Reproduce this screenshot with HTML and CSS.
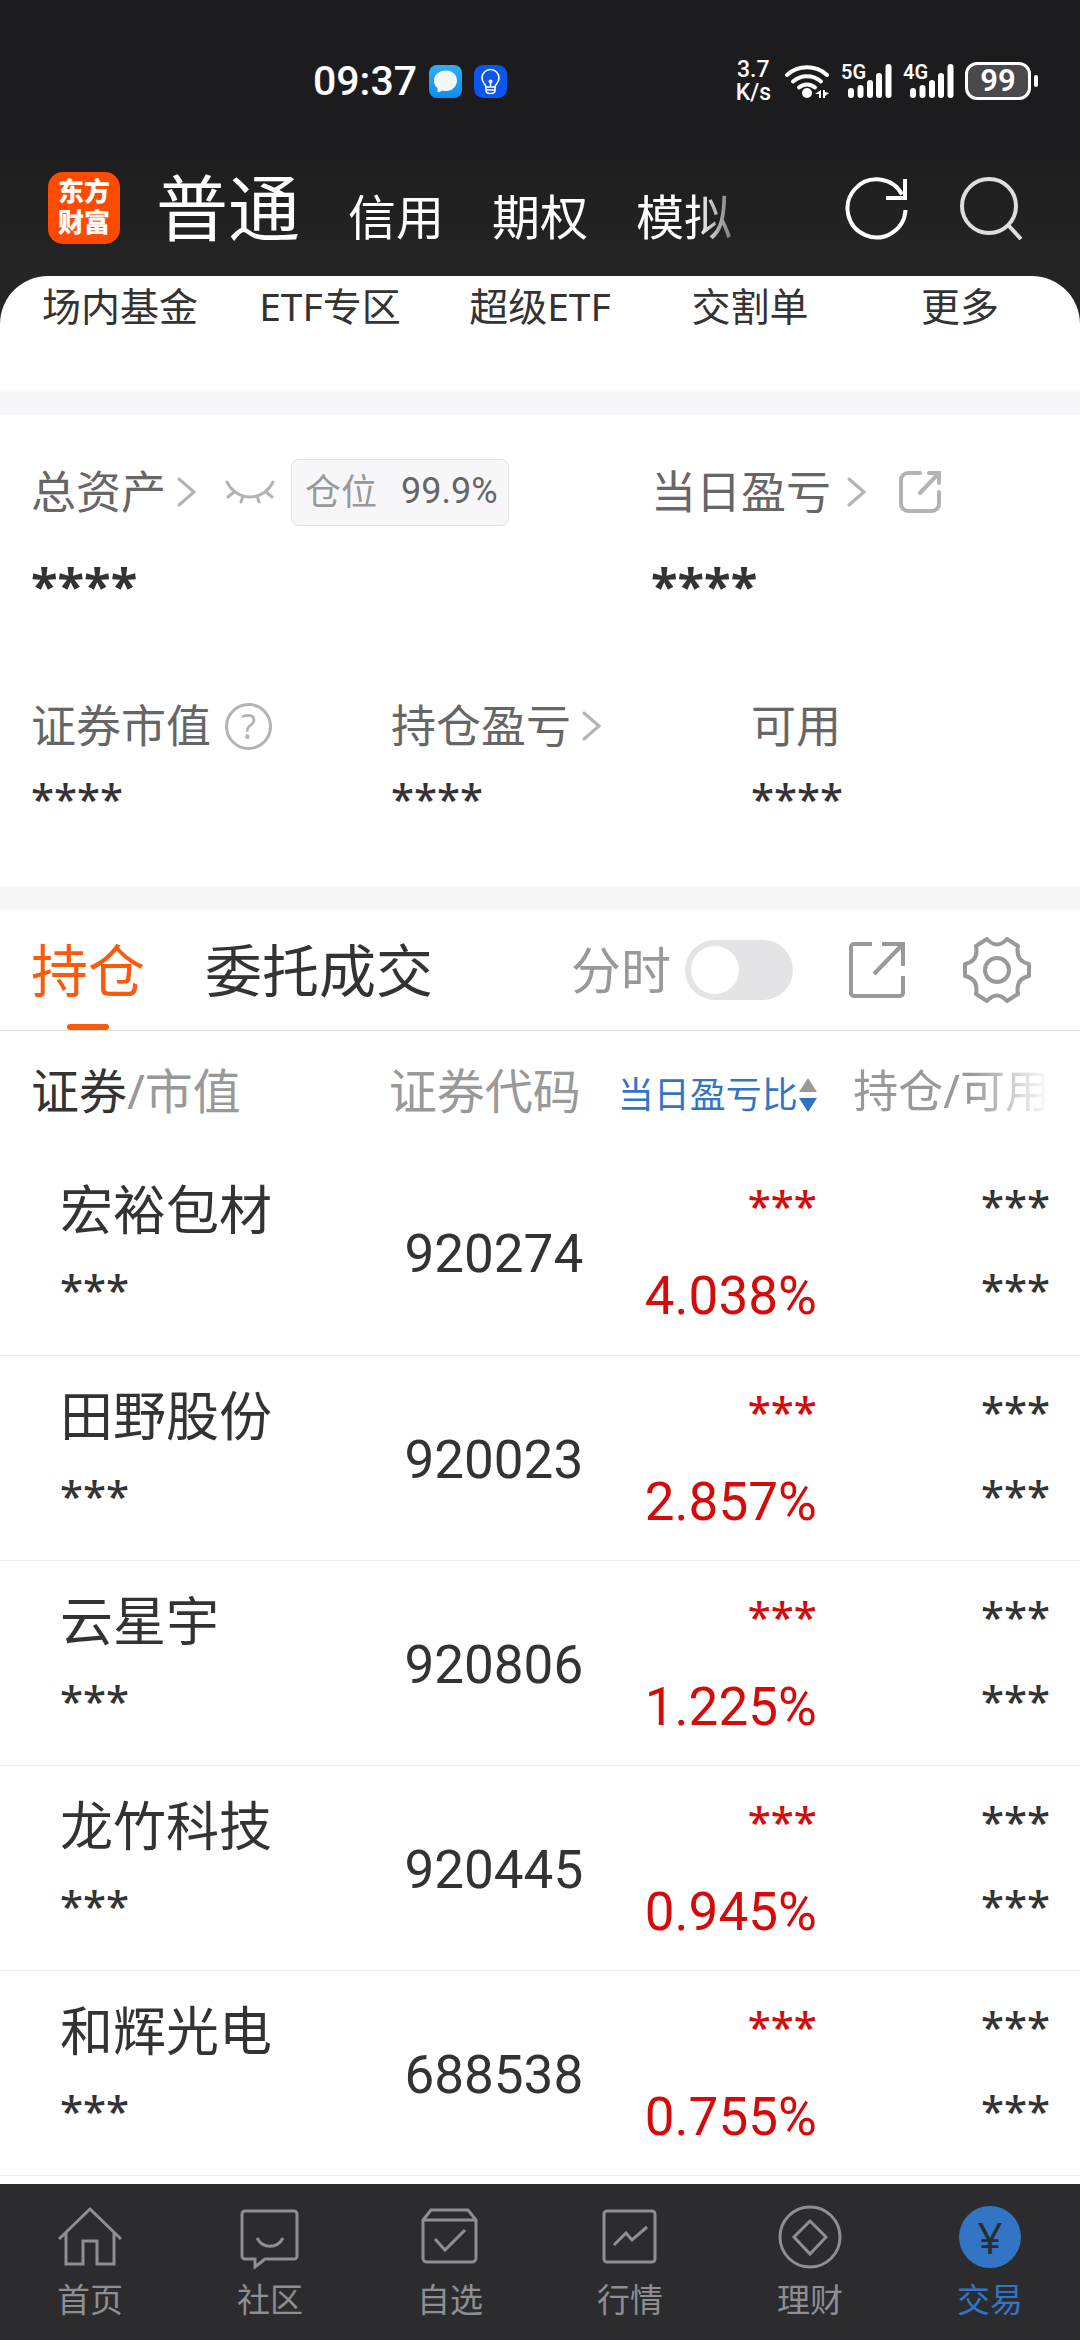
FILE: index.html
```html
<!DOCTYPE html>
<html lang="zh-CN">
<head>
    <meta charset="UTF-8">
    <meta name="viewport" content="width=device-width, initial-scale=1.0">
    <title>交易 - 普通</title>
    <link rel="stylesheet" href="styles.css">
</head>
<body>
    <header class="header">
        <div class="status">
            <div class="status-left">
                <span class="time">09:37</span>
                <svg class="app-icon" viewBox="0 0 33 33">
                    <defs>
                        <linearGradient id="sky" x1="0" y1="0" x2="0" y2="1">
                            <stop offset="0" stop-color="#35aef3"/>
                            <stop offset="1" stop-color="#0a8ff0"/>
                        </linearGradient>
                    </defs>
                    <rect width="33" height="33" rx="8" fill="url(#sky)"/>
                    <path d="M17 5.500c6.500 0 11 4.500 11 10s-4.500 10.500-11 10.500c-1.500 0-2.500 0-4-.5-1 1-3 1.500-4.500 1.500V23C6 21 5 18.500 5 15.500c0-5.500 5-10 12-10z" fill="#f4f5f7"/>
                </svg>
                <svg class="app-icon" viewBox="0 0 33 33">
                    <rect width="33" height="33" rx="9" fill="#0c55ee"/>
                    <g fill="none" stroke="#fff" stroke-width="1.600" stroke-linejoin="round">
                        <path d="M12 22c0-2.500-4-4-4-9a8.500 8.500 0 0 1 17 0c0 5-4 6.500-4 9z"/>
                        <path d="M12 22v3.500c0 2 1.500 3 4.500 3s4.500-1 4.500-3V22M12 25h9M16.500 17v5"/>
                    </g>
                    <circle cx="16.500" cy="16.500" r="2" fill="#fff"/>
                </svg>
            </div>
            <div class="status-right">
                <span class="speed">3.7<br>K/s</span>
                <svg class="wifi" viewBox="0 0 44 34">
                    <g fill="none" stroke="#fff" stroke-width="4" stroke-linecap="round">
                        <path d="M2 11a30 30 0 0 1 40 0"/>
                        <path d="M8 17.500a21 21 0 0 1 28 0"/>
                        <path d="M14 23.500a12 12 0 0 1 16 0"/>
                    </g>
                    <circle cx="22" cy="29" r="5" fill="#fff"/>
                    <path d="M36 26v8h-2v-4h-4zM38 34v-8h2v2l4 1-4 3v2z" fill="#fff"/>
                </svg>
                <div class="signal">
                    <span class="net">5G</span>
                    <svg class="bars" viewBox="0 0 44 34" stroke="#fff" stroke-width="6" stroke-linecap="round">
                        <path d="M3 27v4M12.500 24v7M22 19v12M31 12v19M40.500 3v28"/>
                    </svg>
                </div>
                <div class="signal">
                    <span class="net">4G</span>
                    <svg class="bars" viewBox="0 0 44 34" stroke="#fff" stroke-width="6" stroke-linecap="round">
                        <path d="M3 27v4M12.500 24v7M22 19v12M31 12v19M40.500 3v28"/>
                    </svg>
                </div>
                <span class="battery">99</span>
            </div>
        </div>
        <div class="topbar">
            <span class="logo">东方<br>财富</span>
            <nav class="modes">
                <a class="mode active" href="#">普通</a>
                <a class="mode" href="#">信用</a>
                <a class="mode" href="#">期权</a>
                <a class="mode" href="#">模拟</a>
            </nav>
            <button class="icon-btn" aria-label="刷新">
                <svg width="64" height="64" viewBox="0 0 64 64" fill="none" stroke="#fff" stroke-width="4">
                    <path d="M60.500 34A29 29 0 1 1 57 18.500"/>
                    <path d="M60 3v19H41"/>
                </svg>
            </button>
            <button class="icon-btn" aria-label="搜索">
                <svg width="64" height="64" viewBox="0 0 64 64" fill="none" stroke="#dedede" stroke-width="4">
                    <circle cx="30" cy="30" r="27"/>
                    <path d="M49 49l13 14"/>
                </svg>
            </button>
        </div>
    </header>

    <main class="sheet">
        <nav class="quick">
            <a href="#">场内基金</a>
            <a href="#">ETF专区</a>
            <a href="#">超级ETF</a>
            <a href="#">交割单</a>
            <a href="#">更多</a>
        </nav>

        <section class="assets">
            <div class="assets-main">
                <div class="asset">
                    <div class="asset-label">总资产
                        <svg class="chevron" viewBox="0 0 20 32"><path d="M2 3l15 13L2 29"/></svg>
                        <svg class="eye" viewBox="0 0 50 26" fill="none" stroke="#b3b3b3" stroke-width="3" stroke-linecap="round">
                            <path d="M2 3c10 20 36 20 46 0M9 13l-6 5M18 17l-2 6M32 17l2 6M41 13l6 5"/>
                        </svg>
                        <span class="badge">仓位 <b>99.9%</b></span>
                    </div>
                    <div class="stars big">****</div>
                </div>
                <div class="asset">
                    <div class="asset-label">当日盈亏
                        <svg class="chevron wide" viewBox="0 0 20 32"><path d="M2 3l15 13L2 29"/></svg>
                        <svg class="share" viewBox="0 0 42 42" fill="none" stroke="#b3b3b3" stroke-width="4" stroke-linecap="round">
                            <path d="M21 2H9a7 7 0 0 0-7 7v24a7 7 0 0 0 7 7h24a7 7 0 0 0 7-7V21M30 2h10v10M39 3L21 22"/>
                        </svg>
                    </div>
                    <div class="stars big">****</div>
                </div>
            </div>
            <div class="assets-sub">
                <div class="asset">
                    <div class="asset-label">证券市值
                        <span class="help">?</span>
                    </div>
                    <div class="stars">****</div>
                </div>
                <div class="asset">
                    <div class="asset-label">持仓盈亏
                        <svg class="chevron" viewBox="0 0 20 32"><path d="M2 3l15 13L2 29"/></svg>
                    </div>
                    <div class="stars">****</div>
                </div>
                <div class="asset">
                    <div class="asset-label">可用</div>
                    <div class="stars">****</div>
                </div>
            </div>
        </section>

        <section class="holdings">
            <div class="tabs">
                <button class="tab active">持仓</button>
                <button class="tab">委托成交</button>
                <div class="tools">
                    <label for="minute">分时</label>
                    <input type="checkbox" id="minute" class="toggle">
                    <button class="icon-btn open" aria-label="分享">
                        <svg width="56" height="58" viewBox="0 0 56 58" fill="none" stroke="#999" stroke-width="4">
                            <path d="M23 3H5a3 3 0 0 0-3 3v46a3 3 0 0 0 3 3h46a3 3 0 0 0 3-3V35M33 3h21v22M54 3L25 33"/>
                        </svg>
                    </button>
                    <button class="icon-btn" aria-label="设置">
                        <svg width="68" height="66" viewBox="0 0 68 66" fill="none" stroke="#999" stroke-width="4" stroke-linejoin="round">
                            <path d="M24 2Q34 13 44 2L55 9C53 19 57 25 66 27V39C57 41 53 47 55 57L44 64Q34 53 24 64L13 57C15 47 11 41 2 39V27C11 25 15 19 13 9Z"/>
                            <circle cx="34" cy="33" r="12"/>
                        </svg>
                    </button>
                </div>
            </div>

            <table class="list">
                <thead>
                    <tr>
                        <th class="col-name"><span class="dark">证券</span>/市值</th>
                        <th class="col-code">证券代码</th>
                        <th class="col-rate">
                            <button class="sort">当日盈亏比
                                <svg width="18" height="36" viewBox="0 0 18 36">
                                    <path d="M9 1l9 14H0z" fill="#999"/>
                                    <path d="M9 35l9-14H0z" fill="#2f74c0"/>
                                </svg>
                            </button>
                        </th>
                        <th class="col-hold"><span class="fade">持仓/可用</span></th>
                    </tr>
                </thead>
                <tbody>
                    <tr>
                        <td class="col-name"><p class="name">宏裕包材</p><p class="stars">***</p></td>
                        <td class="col-code">920274</td>
                        <td class="col-rate"><p class="stars">***</p><p class="rate">4.038%</p></td>
                        <td class="col-hold"><p class="stars">***</p><p class="stars">***</p></td>
                    </tr>
                    <tr>
                        <td class="col-name"><p class="name">田野股份</p><p class="stars">***</p></td>
                        <td class="col-code">920023</td>
                        <td class="col-rate"><p class="stars">***</p><p class="rate">2.857%</p></td>
                        <td class="col-hold"><p class="stars">***</p><p class="stars">***</p></td>
                    </tr>
                    <tr>
                        <td class="col-name"><p class="name">云星宇</p><p class="stars">***</p></td>
                        <td class="col-code">920806</td>
                        <td class="col-rate"><p class="stars">***</p><p class="rate">1.225%</p></td>
                        <td class="col-hold"><p class="stars">***</p><p class="stars">***</p></td>
                    </tr>
                    <tr>
                        <td class="col-name"><p class="name">龙竹科技</p><p class="stars">***</p></td>
                        <td class="col-code">920445</td>
                        <td class="col-rate"><p class="stars">***</p><p class="rate">0.945%</p></td>
                        <td class="col-hold"><p class="stars">***</p><p class="stars">***</p></td>
                    </tr>
                    <tr>
                        <td class="col-name"><p class="name">和辉光电</p><p class="stars">***</p></td>
                        <td class="col-code">688538</td>
                        <td class="col-rate"><p class="stars">***</p><p class="rate">0.755%</p></td>
                        <td class="col-hold"><p class="stars">***</p><p class="stars">***</p></td>
                    </tr>
                </tbody>
            </table>
        </section>
    </main>

    <nav class="bottom">
        <a href="#">
            <svg viewBox="0 0 64 64"><path d="M1 34L32 4l31 30M8 28v31h17V36h14v23h17V28"/></svg>
            首页
        </a>
        <a href="#">
            <svg viewBox="0 0 64 64"><path d="M7 6h49a3 3 0 0 1 3 3v42a3 3 0 0 1-3 3H27l-10 8v-8H7a3 3 0 0 1-3-3V9a3 3 0 0 1 3-3zM19 33c6 11 20 11 26 0"/></svg>
            社区
        </a>
        <a href="#">
            <svg viewBox="0 0 64 64"><path d="M5 15l8-10h37l8 10v38a4 4 0 0 1-4 4H9a4 4 0 0 1-4-4zM5 15h53M17 34l10 11 20-20"/></svg>
            自选
        </a>
        <a href="#">
            <svg viewBox="0 0 64 64"><rect x="6" y="6" width="51" height="51" rx="3"/><path d="M16 40l12-12 6 7 15-13"/></svg>
            行情
        </a>
        <a href="#">
            <svg viewBox="0 0 64 64"><circle cx="32" cy="32" r="30"/><path d="M32 16l16 16-16 17-16-17z"/></svg>
            理财
        </a>
        <a href="#" class="active">
            <span class="yen">¥</span>
            交易
        </a>
    </nav>
</body>
</html>
```

FILE: styles.css
```css
* {
    margin: 0;
    padding: 0;
    box-sizing: border-box;
}
:root {
    --font: "Noto Sans", "Noto Sans CJK SC", sans-serif;
    --font-number: Roboto, "Noto Sans CJK SC", sans-serif;
    --dark: #333;
    --grey: #666;
    --light: #999;
    --band: #f7f7fa;
    --orange: #f95a0c;
    --blue: #3275c4;
    --red: #d40b0b;
    --side: 31px;
}
body {
    display: flex;
    flex-direction: column;
    min-height: 100vh;
    background: #242424;
    color: var(--dark);
    font-family: var(--font);
    line-height: 1.2;
}
a {
    color: inherit;
    text-decoration: none;
}
button {
    border: none;
    background: none;
    color: inherit;
    font: inherit;
}
svg {
    flex: none;
    display: block;
}

/* status bar */
.header {
    background: linear-gradient(#1c1c1e 45%, #252525);
    color: white;
}
.status {
    display: flex;
    justify-content: space-between;
    align-items: center;
    height: 140px;
    padding: 22px 49px 0 313px;
    font-family: var(--font-number);
}
.status-left,
.status-right {
    display: flex;
    align-items: center;
}
.status-left {
    gap: 12px;
}
.time {
    font-size: 41px;
    font-weight: 500;
    line-height: 54px;
}
.app-icon {
    width: 33px;
    height: 33px;
}
.speed {
    margin-right: 14px;
    font-size: 23px;
    font-weight: 500;
    line-height: 23px;
    text-align: center;
}
.wifi {
    width: 44px;
    height: 34px;
    margin-right: 12px;
}
.signal {
    position: relative;
    margin-right: 11px;
    padding-left: 7px;
}
.bars {
    width: 44px;
    height: 34px;
}
.net {
    position: absolute;
    top: 0;
    left: 0;
    font-size: 20px;
    font-weight: 600;
    line-height: 17px;
}
.battery {
    position: relative;
    width: 66px;
    height: 38px;
    border: 3px solid white;
    border-radius: 12px;
    background: #4a4a4c;
    font-size: 31px;
    font-weight: 600;
    line-height: 32px;
    text-align: center;
}
.battery::after {
    content: "";
    position: absolute;
    top: 10px;
    right: -10px;
    width: 4px;
    height: 12px;
    border-radius: 2px;
    background: white;
}

/* top bar */
.topbar {
    display: flex;
    align-items: center;
    height: 136px;
    padding: 0 57px 0 48px;
}
.logo {
    flex: none;
    width: 72px;
    height: 72px;
    padding-top: 4px;
    border-radius: 15px;
    background: #ff4a00;
    font-size: 26px;
    font-weight: 900;
    line-height: 31px;
    text-align: center;
}
.modes {
    flex: 1;
    display: flex;
    align-items: baseline;
    gap: 48px;
    margin: 0 84px 0 36px;
    padding-bottom: 2px;
    white-space: nowrap;
    mask-image: linear-gradient(to right, black 540px, transparent 600px);
}
.mode {
    font-size: 48px;
}
.mode.active {
    font-size: 72px;
    line-height: 120px;
}
.icon-btn {
    flex: none;
}
.topbar .icon-btn + .icon-btn {
    margin-left: 50px;
}

/* white sheet */
.sheet {
    flex: 1;
    border-radius: 48px 48px 0 0;
    background: white;
}
.quick {
    display: grid;
    grid-template-columns: repeat(5, 1fr);
    height: 115px;
    padding: 0 15px;
    font-size: 39px;
    line-height: 60px;
    text-align: center;
}

/* assets */
.assets {
    border: solid var(--band);
    border-width: 24px 0;
    padding: 37px 0 43px;
}
.assets-main {
    display: grid;
    grid-template-columns: 31fr 23fr;
    margin-bottom: 47px;
}
.assets-sub {
    display: grid;
    grid-template-columns: repeat(3, 1fr);
}
.asset {
    padding-left: var(--side);
}
.asset-label {
    display: flex;
    align-items: center;
    height: 80px;
    color: var(--grey);
    font-size: 45px;
    white-space: nowrap;
}
.assets-sub .asset-label {
    height: 66px;
}
.chevron {
    width: 20px;
    height: 32px;
    margin-left: 11px;
    fill: none;
    stroke: #b3b3b3;
    stroke-width: 3;
    stroke-linecap: round;
}
.chevron.wide {
    margin-left: 16px;
}
.eye {
    width: 50px;
    height: 26px;
    margin-left: 28px;
}
.share {
    width: 42px;
    height: 42px;
    margin-left: 32px;
}
.badge {
    display: flex;
    align-items: center;
    gap: 24px;
    height: 67px;
    margin-left: 16px;
    padding: 0 10px 0 13px;
    border: 1px solid #e2e2e4;
    border-radius: 8px;
    background: var(--band);
    color: var(--light);
    font-size: 36px;
}
.badge b {
    color: var(--grey);
    font-family: var(--font-number);
    font-weight: 400;
}
.help {
    width: 47px;
    height: 47px;
    margin-left: 14px;
    border: 3px solid #b3b3b3;
    border-radius: 50%;
    color: #b3b3b3;
    font-size: 34px;
    line-height: 40px;
    text-align: center;
}
.stars {
    padding-bottom: 4px;
    font-size: 42px;
    font-weight: 500;
    line-height: 80px;
}
.stars.big {
    padding-bottom: 8px;
    font-size: 49px;
    font-weight: 700;
    line-height: 106px;
}

/* holdings */
.tabs {
    display: flex;
    align-items: stretch;
    height: 121px;
    padding: 0 49px 0 var(--side);
    border-bottom: 1px solid #ddd;
    font-size: 57px;
}
.tab {
    position: relative;
    margin-right: 60px;
}
.tab.active {
    color: var(--orange);
}
.tab.active::after {
    content: "";
    position: absolute;
    bottom: 0;
    left: 50%;
    width: 42px;
    height: 6px;
    margin-left: -21px;
    border-radius: 3px;
    background: var(--orange);
}
.tools {
    display: flex;
    align-items: center;
    margin-left: auto;
    color: var(--light);
    font-size: 50px;
}
.toggle {
    appearance: none;
    width: 108px;
    height: 60px;
    margin: 0 56px 0 14px;
    padding: 6px;
    border-radius: 30px;
    background: #e4e4e6;
}
.toggle::before {
    content: "";
    display: block;
    width: 48px;
    height: 48px;
    border-radius: 50%;
    background: white;
}
.toggle:checked::before {
    margin-left: auto;
}
.open {
    margin-right: 58px;
}
.list {
    width: 100%;
    border-collapse: collapse;
    table-layout: fixed;
}
.list th {
    height: 119px;
    color: var(--light);
    font-size: 48px;
    font-weight: 400;
    text-align: left;
    white-space: nowrap;
}
.list td {
    height: 205px;
    border-bottom: 1px solid #ececec;
    vertical-align: top;
}
.col-name {
    width: 36%;
    padding-left: 60px;
}
th.col-name {
    padding-left: var(--side);
}
.col-code {
    width: 18%;
}
.col-rate {
    width: 22%;
    padding-right: 4px;
}
.col-hold {
    padding-right: 30px;
}
.dark {
    color: var(--dark);
}
.sort {
    display: flex;
    align-items: center;
    justify-content: flex-end;
    gap: 1px;
    width: 100%;
    padding-top: 8px;
    color: var(--blue);
    font-size: 36px;
}
.list th.col-hold {
    font-size: 45px;
    text-align: right;
}
.fade {
    mask-image: linear-gradient(to right, black 60%, transparent);
}
.list td.col-code {
    padding-top: 6px;
    font-family: var(--font-number);
    font-size: 53px;
    text-align: right;
    vertical-align: middle;
}
.name {
    padding-top: 20px;
    font-size: 53px;
    line-height: 80px;
}
td.col-rate,
td.col-hold {
    padding-top: 16px;
    text-align: right;
}
td.col-rate {
    color: var(--red);
}
.rate {
    font-family: var(--font-number);
    font-size: 53px;
    line-height: 92px;
}

/* bottom nav */
.bottom {
    position: sticky;
    bottom: 0;
    display: grid;
    grid-template-columns: repeat(6, 1fr);
    height: 156px;
    padding-top: 21px;
    background: #2c2c2e;
    color: #8e8e93;
    font-size: 33px;
    line-height: 44px;
}
.bottom a {
    display: flex;
    flex-direction: column;
    align-items: center;
    gap: 9px;
}
.bottom svg {
    width: 64px;
    height: 64px;
    fill: none;
    stroke: currentColor;
    stroke-width: 3;
}
.bottom .active {
    color: var(--blue);
}
.yen {
    width: 62px;
    height: 62px;
    margin: 1px;
    border-radius: 50%;
    background: var(--blue);
    color: #2c2c2e;
    font-size: 44px;
    line-height: 62px;
    text-align: center;
}
```
